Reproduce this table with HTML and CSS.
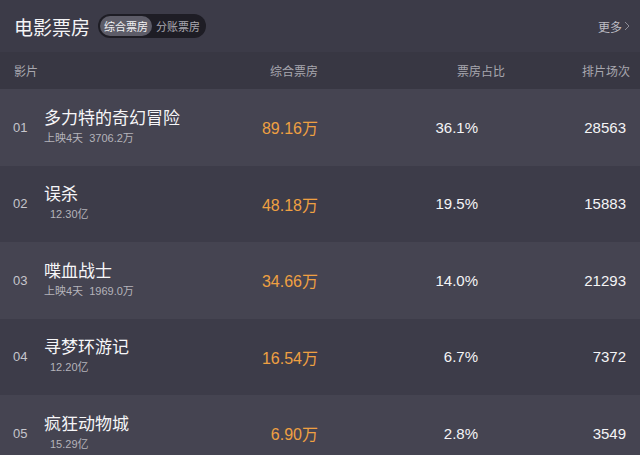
FILE: index.html
```html
<!DOCTYPE html>
<html lang="zh">
<head>
<meta charset="utf-8">
<link rel="stylesheet" href="styles.css">
</head>
<body>
<div class="page">
  <header class="top">
    <h1 class="title">电影票房</h1>
    <div class="toggle">
      <span class="seg active">综合票房</span>
      <span class="seg">分账票房</span>
    </div>
    <a class="more">更多<svg class="chev" width="6" height="10" viewBox="0 0 6 10"><path d="M1 1l4 4-4 4" fill="none" stroke="#8d8c96" stroke-width="1"/></svg></a>
  </header>
  <div class="colhead">
    <span class="h-name">影片</span>
    <span class="h-amt">综合票房</span>
    <span class="h-pct">票房占比</span>
    <span class="h-cnt">排片场次</span>
  </div>
  <div class="row odd">
    <span class="num">01</span>
    <div class="name"><div class="film">多力特的奇幻冒险</div><div class="sub">上映4天&nbsp;&nbsp;3706.2万</div></div>
    <span class="amt">89.16万</span><span class="pct">36.1%</span><span class="cnt">28563</span>
  </div>
  <div class="row even">
    <span class="num">02</span>
    <div class="name"><div class="film">误杀</div><div class="sub indent">12.30亿</div></div>
    <span class="amt">48.18万</span><span class="pct">19.5%</span><span class="cnt">15883</span>
  </div>
  <div class="row odd">
    <span class="num">03</span>
    <div class="name"><div class="film">喋血战士</div><div class="sub">上映4天&nbsp;&nbsp;1969.0万</div></div>
    <span class="amt">34.66万</span><span class="pct">14.0%</span><span class="cnt">21293</span>
  </div>
  <div class="row even">
    <span class="num">04</span>
    <div class="name"><div class="film">寻梦环游记</div><div class="sub indent">12.20亿</div></div>
    <span class="amt">16.54万</span><span class="pct">6.7%</span><span class="cnt">7372</span>
  </div>
  <div class="row odd">
    <span class="num">05</span>
    <div class="name"><div class="film">疯狂动物城</div><div class="sub indent">15.29亿</div></div>
    <span class="amt">6.90万</span><span class="pct">2.8%</span><span class="cnt">3549</span>
  </div>
</div>
</body>
</html>
```
FILE: styles.css
```css
html, body {
  margin: 0;
  padding: 0;
  background: #3c3b48;
  overflow: hidden;
}
.page {
  width: 640px;
  height: 455px;
  overflow: hidden;
  font-family: "Liberation Sans", "Noto Sans CJK SC", sans-serif;
  color: #fff;
}
.top {
  height: 52px;
  display: flex;
  align-items: center;
  padding: 0 10px 0 14px;
  background: #3c3b48;
}
.title {
  margin: 0;
  font-size: 19px;
  font-weight: normal;
  color: #f4f4f6;
  font-family: "Noto Sans CJK SC", sans-serif;
  white-space: nowrap;
}
.toggle {
  margin-left: 8px;
  height: 24px;
  display: flex;
  align-items: center;
  flex-shrink: 0;
  background: #1e1d25;
  border-radius: 12px;
  padding: 0 2px;
}
.seg {
  font-size: 11px;
  color: #a9a8b0;
  font-family: "Noto Sans CJK SC", sans-serif;
  white-space: nowrap;
  height: 20px;
  line-height: 20px;
  padding: 0 4px;
  border-radius: 10px;
}
.seg.active {
  background: #5d5c68;
  color: #f2f2f4;
}
.more {
  margin-left: auto;
  font-size: 12px;
  color: #bdbcc3;
  font-family: "Noto Sans CJK SC", sans-serif;
  display: flex;
  align-items: center;
  gap: 2px;
  white-space: nowrap;
}
.colhead {
  height: 37px;
  display: grid;
  grid-template-columns: 238px 80px 187px 125px;
  align-items: center;
  background: #383743;
  font-size: 12px;
  color: #a8a7af;
  font-family: "Noto Sans CJK SC", sans-serif;
}
.h-name { padding-left: 14px; }
.h-amt, .h-pct, .h-cnt { text-align: right; }
.row {
  height: 76.5px;
  box-sizing: border-box;
  display: grid;
  grid-template-columns: 44px 194px 80px 160px 148px;
  align-items: center;
}
.row.odd { background: #454451; }
.row.even { background: #3d3c49; }
.num {
  padding-left: 13px;
  font-size: 13px;
  color: #c6c6cc;
}
.name {
  display: flex;
  flex-direction: column;
  margin-top: -1px;
}
.film {
  font-size: 17px;
  line-height: 22px;
  color: #f6f6f8;
}
.sub {
  font-size: 11px;
  line-height: 16px;
  color: #b4b3ba;
}
.sub.indent { padding-left: 6px; }
.amt {
  text-align: right;
  font-size: 16px;
  color: #efa042;
}
.pct, .cnt {
  text-align: right;
  font-size: 15px;
  color: #f4f4f6;
}
```
